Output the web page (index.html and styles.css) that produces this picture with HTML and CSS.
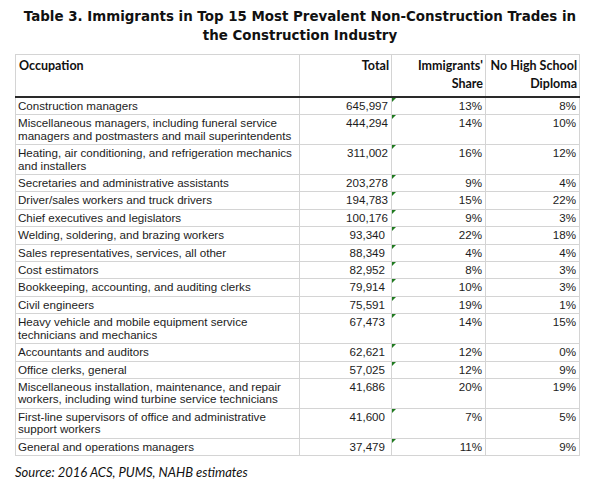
FILE: index.html
```html
<!DOCTYPE html>
<html>
<head>
<meta charset="utf-8">
<link rel="stylesheet" href="styles.css">
</head>
<body>
<div class="page">
  <h1 class="title">Table 3. Immigrants in Top 15 Most Prevalent Non-Construction Trades in the Construction Industry</h1>
  <table class="data">
    <colgroup>
      <col class="c-occ"><col class="c-tot"><col class="c-imm"><col class="c-nhs">
    </colgroup>
    <thead>
      <tr>
        <th class="h-left">Occupation</th>
        <th>Total</th>
        <th>Immigrants'<br>Share</th>
        <th>No High School<br>Diploma</th>
      </tr>
    </thead>
    <tbody>
      <tr><td>Construction managers</td><td class="num">645,997</td><td class="num flag">13%</td><td class="num">8%</td></tr>
      <tr><td>Miscellaneous managers, including funeral service managers and postmasters and mail superintendents</td><td class="num">444,294</td><td class="num flag">14%</td><td class="num">10%</td></tr>
      <tr><td>Heating, air conditioning, and refrigeration mechanics and installers</td><td class="num">311,002</td><td class="num flag">16%</td><td class="num">12%</td></tr>
      <tr><td>Secretaries and administrative assistants</td><td class="num">203,278</td><td class="num flag">9%</td><td class="num">4%</td></tr>
      <tr><td>Driver/sales workers and truck drivers</td><td class="num">194,783</td><td class="num flag">15%</td><td class="num">22%</td></tr>
      <tr><td>Chief executives and legislators</td><td class="num">100,176</td><td class="num flag">9%</td><td class="num">3%</td></tr>
      <tr><td>Welding, soldering, and brazing workers</td><td class="num n5">93,340</td><td class="num flag">22%</td><td class="num">18%</td></tr>
      <tr><td>Sales representatives, services, all other</td><td class="num n5">88,349</td><td class="num flag">4%</td><td class="num">4%</td></tr>
      <tr><td>Cost estimators</td><td class="num n5">82,952</td><td class="num flag">8%</td><td class="num">3%</td></tr>
      <tr><td>Bookkeeping, accounting, and auditing clerks</td><td class="num n5">79,914</td><td class="num flag">10%</td><td class="num">3%</td></tr>
      <tr><td>Civil engineers</td><td class="num n5">75,591</td><td class="num flag">19%</td><td class="num">1%</td></tr>
      <tr><td>Heavy vehicle and mobile equipment service technicians and mechanics</td><td class="num n5">67,473</td><td class="num flag">14%</td><td class="num">15%</td></tr>
      <tr><td>Accountants and auditors</td><td class="num n5">62,621</td><td class="num flag">12%</td><td class="num">0%</td></tr>
      <tr><td>Office clerks, general</td><td class="num n5">57,025</td><td class="num flag">12%</td><td class="num">9%</td></tr>
      <tr><td>Miscellaneous installation, maintenance, and repair workers, including wind turbine service technicians</td><td class="num n5">41,686</td><td class="num">20%</td><td class="num">19%</td></tr>
      <tr><td>First-line supervisors of office and administrative support workers</td><td class="num n5">41,600</td><td class="num flag">7%</td><td class="num">5%</td></tr>
      <tr><td>General and operations managers</td><td class="num n5">37,479</td><td class="num flag">11%</td><td class="num">9%</td></tr>
    </tbody>
  </table>
  <p class="source">Source: 2016 ACS, PUMS, NAHB estimates</p>
</div>
</body>
</html>
```
FILE: styles.css
```css
html, body {
  margin: 0;
  padding: 0;
  background: #ffffff;
}

.page {
  width: 600px;
  padding: 7px 0 0 0;
}

.title {
  margin: 0 0 9px 0;
  padding: 0 21px;
  text-align: center;
  font-family: "DejaVu Sans", Verdana, sans-serif;
  font-weight: bold;
  font-size: 13.4px;
  line-height: 19px;
  color: #111111;
}

.data {
  margin-left: 15px;
  width: 564px;
  border-collapse: collapse;
  table-layout: fixed;
}

.c-occ { width: 284px; }
.c-tot { width: 92px; }
.c-imm { width: 94px; }
.c-nhs { width: 94px; }

.data th {
  font-family: Lato, "Open Sans", sans-serif;
  font-weight: bold;
  font-size: 12.5px;
  line-height: 18px;
  color: #111111;
  text-align: right;
  vertical-align: top;
  padding: 2px 2px 3px 3px;
  border: 1px solid #d4d4d4;
  border-bottom: 2px solid #2a2a2a;
}

.data th.h-left {
  text-align: left;
}

.data td {
  font-family: "Liberation Sans", Arial, sans-serif;
  font-size: 11.6px;
  line-height: 12.4px;
  color: #1c1c1c;
  vertical-align: top;
  padding: 2px 3px 2px 2px;
  border: 1px solid #d4d4d4;
  text-align: left;
}

.data td.num {
  text-align: right;
}

.data td.n5 {
  padding-right: 6px;
}

.data td.flag {
  position: relative;
}

.data td.flag::before {
  content: "";
  position: absolute;
  left: 0;
  top: 0;
  width: 0;
  height: 0;
  border-top: 4px solid #1f7a1f;
  border-right: 4px solid transparent;
}

.source {
  margin: 8px 0 0 15px;
  font-family: Lato, "Open Sans", sans-serif;
  font-style: italic;
  font-size: 13px;
  line-height: 16px;
  color: #111111;
}
```
